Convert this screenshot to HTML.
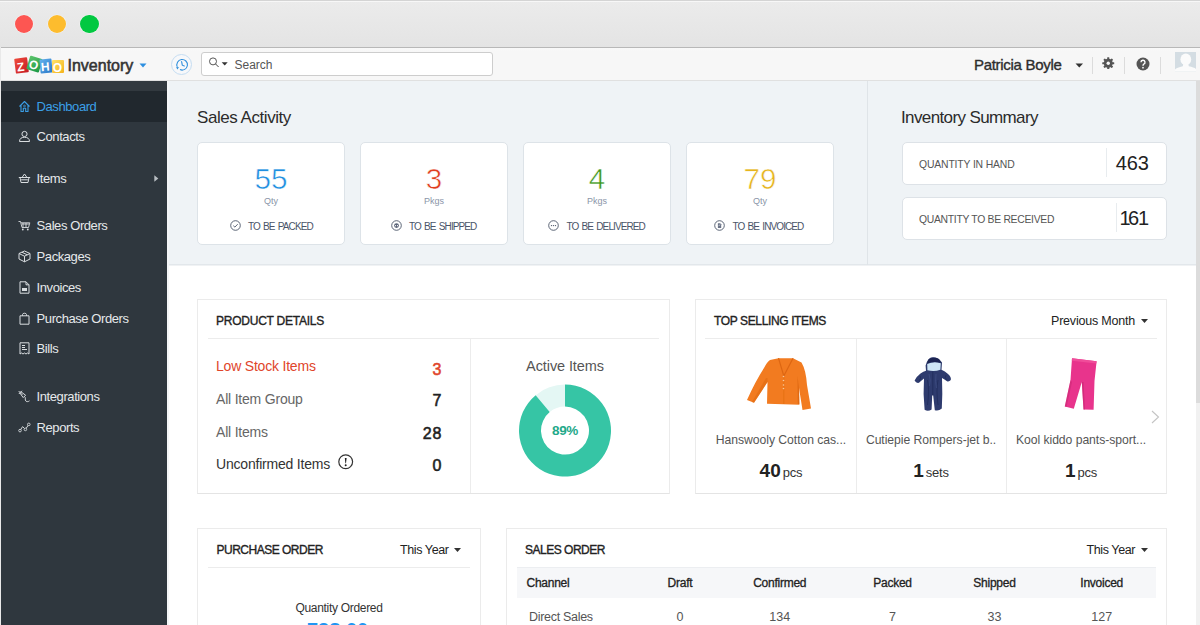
<!DOCTYPE html>
<html><head><meta charset="utf-8">
<style>
*{box-sizing:border-box;margin:0;padding:0}
html,body{width:1200px;height:625px;overflow:hidden;background:#fff;font-family:"Liberation Sans",sans-serif;color:#333}
.a{position:absolute}
.t{position:absolute;white-space:nowrap;line-height:1}
#titlebar{left:0;top:0;width:1200px;height:47px;background:linear-gradient(#ebebeb,#e4e4e4);border-top:1px solid #d4d4d4;box-shadow:inset 0 1px 0 #f7f7f7}
.dot{position:absolute;width:18.5px;height:18.5px;border-radius:50%;top:13.5px;box-shadow:0 0 0 0.6px rgba(255,255,255,0.5)}
#header{left:0;top:47px;width:1200px;height:34px;background:linear-gradient(#b8b8b8 0,#b8b8b8 1px,#f9f9f9 1px,#f7f7f7 4px);border-bottom:1px solid #e0e0e0}
#side{left:1px;top:81px;width:166px;height:544px;background:#2f373e}
.nav{position:absolute;left:35.6px;font-size:13px;color:#e8eaec;letter-spacing:-0.42px;line-height:1}
.ico{position:absolute;left:17.2px}
#topsec{left:167px;top:81px;width:1029px;height:184px;background:#eff3f6;border-bottom:1px solid #e2e7eb}
.sc{position:absolute;top:142px;width:148px;height:103px;background:#fff;border:1px solid #dde3e8;border-radius:5px}
.num{position:absolute;left:0;width:100%;text-align:center;top:23px;font-size:29px;line-height:1;font-weight:400}
.unit{position:absolute;left:0;width:100%;text-align:center;top:54px;font-size:9.5px;color:#8e9aab;line-height:1}
.lbl{position:absolute;left:0;width:100%;text-align:center;top:79px;font-size:10px;color:#4b5566;letter-spacing:-0.55px;line-height:1;white-space:nowrap}
.card{position:absolute;background:#fff;border:1px solid #ebebeb;border-bottom-color:#e4e4e4}
.hd{position:absolute;font-size:12px;font-weight:400;-webkit-text-stroke:0.35px #222;color:#222;letter-spacing:-0.5px;line-height:1;white-space:nowrap}
</style></head><body>
<div id="titlebar" class="a">
  <div class="dot" style="left:14.5px;background:#fd5652"></div>
  <div class="dot" style="left:47.5px;background:#fdbc2e"></div>
  <div class="dot" style="left:80.3px;background:#02c841"></div>
</div>
<div id="header" class="a">
  <div class="a" style="left:14.5px;top:11px;width:12.5px;height:15px;background:linear-gradient(135deg,#ef4b3c,#c61d26);transform:rotate(-7deg);border-radius:1px"></div>
  <div class="t" style="left:16.5px;top:13.5px;font-size:12px;font-weight:700;color:#fff;transform:rotate(-7deg)">Z</div>
  <div class="a" style="left:27.5px;top:10px;width:12.5px;height:14px;background:linear-gradient(135deg,#5ec56c,#1a9944);transform:rotate(17deg);border-radius:1px"></div>
  <div class="t" style="left:29px;top:12px;font-size:12px;font-weight:700;color:#fff;transform:rotate(17deg)">O</div>
  <div class="a" style="left:39.5px;top:12px;width:12px;height:13.5px;background:linear-gradient(135deg,#64b2ee,#2877c7);transform:rotate(-5deg);border-radius:1px"></div>
  <div class="t" style="left:41px;top:14px;font-size:12px;font-weight:700;color:#fff;transform:rotate(-5deg)">H</div>
  <div class="a" style="left:51.5px;top:12.5px;width:12px;height:13px;background:linear-gradient(135deg,#ffe36a,#f5b21a);border-radius:1px"></div>
  <div class="t" style="left:52.7px;top:14.5px;font-size:12px;font-weight:700;color:#fff">O</div>
  <div class="t" style="left:67.5px;top:11px;font-size:16px;font-weight:400;color:#333;-webkit-text-stroke:0.55px #333">Inventory</div>
  <svg class="a" style="left:139px;top:16px" width="8" height="5"><path d="M0.5 0.5 L7.5 0.5 L4 4.5Z" fill="#2d8fe0"/></svg>
  <div class="a" style="left:171px;top:7px;width:21px;height:21px;border-radius:50%;border:1px solid #c5ddf2;background:#f7f8fa"></div>
  <svg class="a" style="left:175px;top:11px" width="14" height="14" viewBox="0 0 14 14"><path d="M5 11.6 A5.3 5.3 0 1 0 2.3 8.9" fill="none" stroke="#2f8fdc" stroke-width="1.1"/><path d="M1 9.3 L3.9 9.1 L2.6 11.6Z" fill="#2f8fdc"/><path d="M6.6 3.6 L7.3 7.2 L9.3 8" fill="none" stroke="#2f8fdc" stroke-width="1.1" stroke-linecap="round"/></svg>
  <div class="a" style="left:201px;top:5px;width:292px;height:24px;border:1px solid #cdcdcd;border-radius:3px;background:#fff"></div>
  <svg class="a" style="left:208px;top:10px" width="22" height="12" viewBox="0 0 22 12"><circle cx="5" cy="4.4" r="3.5" fill="none" stroke="#444" stroke-width="0.9"/><path d="M7.5 6.9 L10.6 10" stroke="#444" stroke-width="1"/><path d="M13.7 5.3 L19.7 5.3 L16.7 8.4Z" fill="#333"/></svg>
  <div class="t" style="left:234.5px;top:11.6px;font-size:12px;color:#555">Search</div>
  <div class="t" style="left:974px;top:9.8px;font-size:15px;font-weight:400;color:#2d2d2d;letter-spacing:-0.3px;-webkit-text-stroke:0.35px #2d2d2d">Patricia Boyle</div>
  <svg class="a" style="left:1075px;top:16px" width="9" height="5"><path d="M0.5 0.5 L8 0.5 L4.25 4.5Z" fill="#333"/></svg>
  <div class="a" style="left:1092px;top:9.8px;width:1px;height:17px;background:#dcdcdc"></div>
  <svg class="a" style="left:1102px;top:9.8px" width="12.5" height="12.5" viewBox="0 0 14 14"><g fill="#555"><circle cx="7" cy="7" r="5"/><rect x="5.8" y="0.3" width="2.4" height="3" rx="0.6"/><rect x="5.8" y="10.7" width="2.4" height="3" rx="0.6"/><rect x="0.3" y="5.8" width="3" height="2.4" rx="0.6"/><rect x="10.7" y="5.8" width="3" height="2.4" rx="0.6"/><rect x="5.8" y="0.3" width="2.4" height="3" rx="0.6" transform="rotate(45 7 7)"/><rect x="5.8" y="10.7" width="2.4" height="3" rx="0.6" transform="rotate(45 7 7)"/><rect x="0.3" y="5.8" width="3" height="2.4" rx="0.6" transform="rotate(45 7 7)"/><rect x="10.7" y="5.8" width="3" height="2.4" rx="0.6" transform="rotate(45 7 7)"/></g><circle cx="7" cy="7" r="1.9" fill="#f7f7f7"/></svg>
  <div class="a" style="left:1124px;top:9.8px;width:1px;height:17px;background:#dcdcdc"></div>
  <svg class="a" style="left:1135.6px;top:9.9px" width="14" height="14" viewBox="0 0 14 14"><circle cx="7" cy="7" r="6.5" fill="#555"/><path d="M5 5.3 A2 2 0 1 1 7.8 7.1 Q7 7.6 7 8.7" fill="none" stroke="#fff" stroke-width="1.4"/><circle cx="7" cy="10.7" r="0.85" fill="#fff"/></svg>
  <div class="a" style="left:1160px;top:9.8px;width:1px;height:17px;background:#dcdcdc"></div>
  <svg class="a" style="left:1174.5px;top:5.3px" width="21.5" height="19.5" viewBox="0 0 21.5 19.5"><rect width="21.5" height="19.5" fill="#d4dde3"/><ellipse cx="10.8" cy="7.4" rx="5.4" ry="5.9" fill="#fbfbfb"/><path d="M8.3 12 L13.3 12 L13.8 14.3 C17.5 15.2 20.5 16 21.5 17.5 V19.5 H0 V17.5 C1 16 4 15.2 7.8 14.3Z" fill="#fbfbfb"/></svg>
</div>
<div id="side" class="a">
  <div class="a" style="left:0;top:0;width:166px;height:10px;background:#32393f"></div>
  <div class="a" style="left:0;top:10px;width:166px;height:31px;background:#21282e"></div>
  <div class="nav" style="top:18.6px;color:#3ba0e8">Dashboard</div>
  <svg class="ico" style="top:18.5px" width="13" height="13" viewBox="0 0 13 13"><path d="M1.5 6.5 L6.5 1.5 L11.5 6.5 M3 5 V11.5 H5.3 V8.3 H7.7 V11.5 H10 V5" fill="none" stroke="#3b9ee6" stroke-width="1.1" stroke-linejoin="round"/><circle cx="6.5" cy="6" r="0.9" fill="none" stroke="#3b9ee6" stroke-width="0.8"/></svg>
  <div class="nav" style="top:49.2px;color:#e6e9eb">Contacts</div>
  <svg class="ico" style="top:49.1px" width="13" height="13" viewBox="0 0 13 13"><circle cx="6.5" cy="4" r="2.6" fill="none" stroke="#d9dde0" stroke-width="1"/><path d="M1.5 11.5 C1.5 8.5 3.5 7.3 6.5 7.3 C9.5 7.3 11.5 8.5 11.5 11.5 Z" fill="none" stroke="#d9dde0" stroke-width="1" stroke-linejoin="round"/></svg>
  <div class="nav" style="top:90.6px;color:#e6e9eb">Items</div>
  <svg class="ico" style="top:90.5px" width="13" height="13" viewBox="0 0 13 13"><path d="M0.8 5.5 H12.2 M2 5.5 L3 10.5 H10 L11 5.5 M4 5.5 L6.5 2 L9 5.5 M3.2 7.8 H9.8" fill="none" stroke="#d9dde0" stroke-width="1" stroke-linejoin="round"/></svg>
  <div class="nav" style="top:137.6px;color:#e6e9eb">Sales Orders</div>
  <svg class="ico" style="top:137.5px" width="13" height="13" viewBox="0 0 13 13"><path d="M0.5 2.5 H2.5 L4 8.5 H10.5 L11.8 3.8 H3 M4 5 H11 M5 8.5 L5 4 M8 8.5 V4" fill="none" stroke="#d9dde0" stroke-width="0.9"/><circle cx="4.8" cy="10.5" r="0.9" fill="#d9dde0"/><circle cx="9.8" cy="10.5" r="0.9" fill="#d9dde0"/></svg>
  <div class="nav" style="top:168.8px;color:#e6e9eb">Packages</div>
  <svg class="ico" style="top:168.7px" width="13" height="13" viewBox="0 0 13 13"><path d="M6.5 1 L12 3.5 V9 L6.5 11.8 L1 9 V3.5 Z M1 3.5 L6.5 6.2 L12 3.5 M6.5 6.2 V11.8 M3.8 2.2 L9.3 4.8" fill="none" stroke="#d9dde0" stroke-width="1" stroke-linejoin="round"/></svg>
  <div class="nav" style="top:199.6px;color:#e6e9eb">Invoices</div>
  <svg class="ico" style="top:199.5px" width="13" height="13" viewBox="0 0 13 13"><path d="M2 0.8 H8 L11 3.8 V12.2 H2 Z M8 0.8 V3.8 H11" fill="none" stroke="#d9dde0" stroke-width="1" stroke-linejoin="round"/><rect x="4" y="7" width="5" height="3" fill="#d9dde0"/></svg>
  <div class="nav" style="top:230.6px;color:#e6e9eb">Purchase Orders</div>
  <svg class="ico" style="top:230.5px" width="13" height="13" viewBox="0 0 13 13"><path d="M2 3.8 H11 V12.2 H2 Z M4.5 3.8 V2.5 C4.5 0.8 8.5 0.8 8.5 2.5 V3.8" fill="none" stroke="#d9dde0" stroke-width="1" stroke-linejoin="round"/></svg>
  <div class="nav" style="top:261.2px;color:#e6e9eb">Bills</div>
  <svg class="ico" style="top:261.1px" width="13" height="13" viewBox="0 0 13 13"><path d="M2 0.8 H11 V12 L9.5 11 L8 12 L6.5 11 L5 12 L3.5 11 L2 12 Z" fill="none" stroke="#d9dde0" stroke-width="1" stroke-linejoin="round"/><path d="M4 3.5 H7 M4 5.5 H7 M4 7.5 H9" stroke="#d9dde0" stroke-width="1"/></svg>
  <div class="nav" style="top:309.0px;color:#e6e9eb">Integrations</div>
  <svg class="ico" style="top:308.9px" width="13" height="13" viewBox="0 0 13 13"><path d="M0.8 4 L4 0.8 M2.2 2.6 L0.6 1 M4.4 4.8 L2.8 3.2 M2.6 1.6 L7.6 5.2 L5.2 7.6 L1.6 2.6 M6.4 6.4 C8.5 8.2 6.2 9.6 8 11.2 C9 12 10.5 11.6 11.5 10.8" fill="none" stroke="#d4d8db" stroke-width="1" stroke-linejoin="round"/></svg>
  <div class="nav" style="top:339.6px;color:#e6e9eb">Reports</div>
  <svg class="ico" style="top:339.5px" width="13" height="13" viewBox="0 0 13 13"><path d="M2 9.6 L4.6 5.6 L7.4 8.4 L10.8 3.4" fill="none" stroke="#d4d8db" stroke-width="1"/><circle cx="2" cy="9.6" r="1.3" fill="#2f373e" stroke="#d4d8db" stroke-width="0.9"/><circle cx="7.4" cy="8.4" r="1.3" fill="#2f373e" stroke="#d4d8db" stroke-width="0.9"/><circle cx="10.8" cy="3.4" r="1.3" fill="#2f373e" stroke="#d4d8db" stroke-width="0.9"/></svg>
  <svg class="a" style="left:153px;top:94px" width="5" height="7"><path d="M0.3 0.3 L4.3 3.5 L0.3 6.7Z" fill="#b9bec3"/></svg>
</div>
<div id="topsec" class="a"></div>
<div class="a" style="left:867px;top:81px;width:1px;height:184px;background:#dfe4e8"></div>
<div class="t" style="left:197px;top:108.5px;font-size:17px;color:#2b2b2b;letter-spacing:-0.45px">Sales Activity</div>
<div class="t" style="left:901px;top:108.5px;font-size:17px;color:#2b2b2b;letter-spacing:-0.62px">Inventory Summary</div>
<div class="sc" style="left:197px"></div>
<div class="t" style="left:197px;width:148px;text-align:center;top:163.7px;font-size:29.6px;-webkit-text-stroke:0.55px #fff;color:#1f8ee0">55</div>
<div class="t" style="left:197px;width:148px;text-align:center;top:196.7px;font-size:9px;color:#8a95a8">Qty</div>
<svg class="a" style="left:229.5px;top:220px" width="11" height="11" viewBox="0 0 11 11"><circle cx="5.5" cy="5.5" r="4.8" fill="none" stroke="#4b5568" stroke-width="0.9"/><path d="M3.3 5.7 L4.9 7.1 L7.7 4.2" fill="none" stroke="#4b5568" stroke-width="0.9"/></svg>
<div class="t" style="left:248.0px;top:221.9px;font-size:10px;color:#4a5468;letter-spacing:-0.9px;word-spacing:1.3px">TO BE PACKED</div>
<div class="sc" style="left:360px"></div>
<div class="t" style="left:360px;width:148px;text-align:center;top:163.7px;font-size:29.6px;-webkit-text-stroke:0.55px #fff;color:#e03c1e">3</div>
<div class="t" style="left:360px;width:148px;text-align:center;top:196.7px;font-size:9px;color:#8a95a8">Pkgs</div>
<svg class="a" style="left:390.5px;top:220px" width="11" height="11" viewBox="0 0 11 11"><circle cx="5.5" cy="5.5" r="4.8" fill="none" stroke="#4b5568" stroke-width="0.9"/><ellipse cx="5.5" cy="5.6" rx="2.4" ry="2.3" fill="#5b6478"/><circle cx="4.5" cy="5.7" r="0.6" fill="#fff"/><circle cx="6.5" cy="5.7" r="0.6" fill="#fff"/></svg>
<div class="t" style="left:409.0px;top:221.9px;font-size:10px;color:#4a5468;letter-spacing:-0.9px;word-spacing:1.3px">TO BE SHIPPED</div>
<div class="sc" style="left:523px"></div>
<div class="t" style="left:523px;width:148px;text-align:center;top:163.7px;font-size:29.6px;-webkit-text-stroke:0.55px #fff;color:#3c961c">4</div>
<div class="t" style="left:523px;width:148px;text-align:center;top:196.7px;font-size:9px;color:#8a95a8">Pkgs</div>
<svg class="a" style="left:548.0px;top:220px" width="11" height="11" viewBox="0 0 11 11"><circle cx="5.5" cy="5.5" r="4.8" fill="none" stroke="#4b5568" stroke-width="0.9"/><circle cx="3.5" cy="5.6" r="0.7" fill="#4b5568"/><circle cx="5.5" cy="5.6" r="0.7" fill="#4b5568"/><circle cx="7.5" cy="5.6" r="0.7" fill="#4b5568"/></svg>
<div class="t" style="left:566.5px;top:221.9px;font-size:10px;color:#4a5468;letter-spacing:-0.9px;word-spacing:1.3px">TO BE DELIVERED</div>
<div class="sc" style="left:686px"></div>
<div class="t" style="left:686px;width:148px;text-align:center;top:163.7px;font-size:29.6px;-webkit-text-stroke:0.55px #fff;color:#e6b41e">79</div>
<div class="t" style="left:686px;width:148px;text-align:center;top:196.7px;font-size:9px;color:#8a95a8">Qty</div>
<svg class="a" style="left:714.0px;top:220px" width="11" height="11" viewBox="0 0 11 11"><circle cx="5.5" cy="5.5" r="4.8" fill="none" stroke="#4b5568" stroke-width="0.9"/><path d="M3.9 3.2 H6.2 L7.2 4.2 V8 H3.9 Z" fill="#6a7386"/><path d="M4.6 5.6 L6.4 4.8" stroke="#fff" stroke-width="0.6"/></svg>
<div class="t" style="left:732.5px;top:221.9px;font-size:10px;color:#4a5468;letter-spacing:-0.9px;word-spacing:1.3px">TO BE INVOICED</div>
<div class="a" style="left:902px;top:142px;width:265px;height:43px;background:#fff;border:1px solid #dde2e7;border-radius:5px"></div>
<div class="t" style="left:919px;top:159.5px;font-size:10.4px;color:#555;letter-spacing:-0.15px">QUANTITY IN HAND</div>
<div class="a" style="left:1106px;top:148px;width:1px;height:29px;background:#e8ecef"></div>
<div class="t" style="left:1000px;width:149px;text-align:right;top:153.3px;font-size:20px;color:#222">463</div>
<div class="a" style="left:902px;top:197px;width:265px;height:43px;background:#fff;border:1px solid #dde2e7;border-radius:5px"></div>
<div class="t" style="left:919px;top:214.5px;font-size:10.4px;color:#555;letter-spacing:-0.3px">QUANTITY TO BE RECEIVED</div>
<div class="a" style="left:1116px;top:203px;width:1px;height:29px;background:#e8ecef"></div>
<div class="t" style="left:1000px;width:149px;text-align:right;top:208.3px;font-size:20px;color:#222;letter-spacing:-2.6px;padding-right:0">1<span style="letter-spacing:-1.2px">6</span><span style="letter-spacing:0">1</span></div>
<div class="card" style="left:197px;top:299px;width:473px;height:195px"></div>
<div class="hd" style="left:216px;top:315.0px;letter-spacing:-0.24px">PRODUCT DETAILS</div>
<div class="a" style="left:208px;top:338px;width:451px;height:1px;background:#ececec"></div>
<div class="a" style="left:470px;top:339px;width:1px;height:154px;background:#ececec"></div>
<div class="t" style="left:216px;top:359.4px;font-size:14px;color:#e0452b;letter-spacing:-0.2px">Low Stock Items</div>
<div class="t" style="left:341px;width:100.5px;text-align:right;top:361.6px;font-size:16px;font-weight:400;-webkit-text-stroke:0.55px #e0452b;color:#e0452b">3</div>
<div class="t" style="left:216px;top:392.0px;font-size:14px;color:#666;letter-spacing:-0.2px">All Item Group</div>
<div class="t" style="left:341px;width:100.5px;text-align:right;top:393.4px;font-size:16px;font-weight:400;-webkit-text-stroke:0.55px #222;color:#222">7</div>
<div class="t" style="left:216px;top:424.7px;font-size:14px;color:#666;letter-spacing:-0.2px">All Items</div>
<div class="t" style="left:341px;width:101.5px;text-align:right;top:425.6px;font-size:16px;letter-spacing:1px;font-weight:400;-webkit-text-stroke:0.55px #222;color:#222">28</div>
<div class="t" style="left:216px;top:457.0px;font-size:14px;color:#333;letter-spacing:-0.2px">Unconfirmed Items</div>
<div class="t" style="left:341px;width:100.5px;text-align:right;top:458.3px;font-size:16px;font-weight:400;-webkit-text-stroke:0.55px #222;color:#222">0</div>
<svg class="a" style="left:338px;top:454px" width="16" height="16" viewBox="0 0 16 16"><circle cx="7.7" cy="7.8" r="6.9" fill="none" stroke="#333" stroke-width="1.2"/><path d="M6.8 4 L8.6 4 L8 9.3 L7.4 9.3 Z" fill="#222"/><circle cx="7.7" cy="11.2" r="1" fill="#222"/></svg>
<div class="t" style="left:470px;width:190px;text-align:center;top:359.4px;font-size:14.5px;color:#555;letter-spacing:-0.1px">Active Items</div>
<svg class="a" style="left:0;top:0" width="1200" height="625"><path d="M535.68 395.16 A46 46 0 0 1 565 384.6 L565 406.6 A24 24 0 0 0 549.70 412.11 Z" fill="#e4f7f4"/><path d="M565 384.6 A46 46 0 1 1 535.68 395.16 L549.70 412.11 A24 24 0 1 0 565 406.6 Z" fill="#36c5a5"/></svg>
<div class="t" style="left:515px;width:100px;text-align:center;top:423.6px;font-size:13.5px;font-weight:700;color:#1fa98a;letter-spacing:-0.4px">89%</div>
<div class="card" style="left:695px;top:299px;width:472px;height:195px"></div>
<div class="hd" style="left:714px;top:315.0px;letter-spacing:-0.37px">TOP SELLING ITEMS</div>
<div class="t" style="left:1051px;top:314.5px;font-size:12.5px;color:#222;letter-spacing:-0.2px">Previous Month</div>
<svg class="a" style="left:1141px;top:319px" width="7" height="4"><path d="M0 0 L7 0 L3.5 4Z" fill="#333"/></svg>
<div class="a" style="left:705px;top:338px;width:452px;height:1px;background:#ececec"></div>
<div class="a" style="left:856px;top:339px;width:1px;height:154px;background:#ececec"></div>
<div class="a" style="left:1006px;top:339px;width:1px;height:154px;background:#ececec"></div>
<div class="t" style="left:706px;width:150px;text-align:center;top:434.2px;font-size:12.2px;color:#555;letter-spacing:-0.05px">Hanswooly Cotton cas...</div>
<div class="t" style="left:706px;width:150px;text-align:center;top:460.7px;font-size:19px;color:#222"><b>40</b><span style="font-size:13px;color:#333;margin-left:2px;letter-spacing:-0.2px">pcs</span></div>
<div class="t" style="left:856px;width:150px;text-align:center;top:434.2px;font-size:12.2px;color:#555;letter-spacing:-0.05px">Cutiepie Rompers-jet b..</div>
<div class="t" style="left:856px;width:150px;text-align:center;top:460.7px;font-size:19px;color:#222"><b>1</b><span style="font-size:13px;color:#333;margin-left:2px;letter-spacing:-0.2px">sets</span></div>
<div class="t" style="left:1006px;width:150px;text-align:center;top:434.2px;font-size:12.2px;color:#555;letter-spacing:-0.05px">Kool kiddo pants-sport...</div>
<div class="t" style="left:1006px;width:150px;text-align:center;top:460.7px;font-size:19px;color:#222"><b>1</b><span style="font-size:13px;color:#333;margin-left:2px;letter-spacing:-0.2px">pcs</span></div>
<svg class="a" style="left:1151px;top:410px" width="9" height="14"><path d="M1 1 L7.5 7 L1 13" fill="none" stroke="#c4c4c4" stroke-width="1.1"/></svg>
<svg class="a" style="left:740px;top:350px" width="80" height="65" viewBox="0 0 80 65">
<path d="M30 10 L38.5 8.2 L53 8.2 L61.5 12.5 Q66 20 67 35 L71 58.5 L62.5 60 L59 38 L59.4 54.7 L27 53.8 L27.5 32 L14 52.8 L7 50 Q15 32 24 18 Q27 12 30 10 Z" fill="#f27b20"/>
<path d="M27.5 28 L27.5 32 L14 52.8 L12 52 L26 28Z" fill="#e06a12" opacity="0.6"/>
<path d="M57.5 26 L59 38 L59.4 54 L57.8 54 L57.5 30Z" fill="#d9640e" opacity="0.7"/>
<path d="M38.5 8.2 L43.8 26 L53 8.2" fill="none" stroke="#dd6612" stroke-width="1.2"/>
<path d="M43.8 26 V54" stroke="#e2700f" stroke-width="0.8"/>
<g fill="#f8c89a"><circle cx="43.5" cy="26.5" r="0.8"/><circle cx="43.5" cy="30.5" r="0.8"/><circle cx="43.5" cy="35" r="0.8"/><circle cx="43.5" cy="38.5" r="0.8"/></g>
</svg>
<svg class="a" style="left:905px;top:350px" width="55" height="65" viewBox="0 0 55 65">
<path d="M27 7.2 Q33 6.5 37 12.5 L36.5 19.8 Q40 21 43 24 Q46.5 27.2 45.8 30 Q44 32 42 31.2 Q39.5 29.5 37 28 L37.3 44 L36.8 58.5 Q33.5 61.5 29.8 60.2 L28.2 45.5 L27.2 45.5 L26.6 59.5 Q23 61.8 19.6 59.8 L18.6 44 L19 28.5 Q16.5 30.5 14 32.8 Q11 33.5 9.6 30.5 Q11.5 26.5 15.5 23.5 Q18.5 21.5 21 20.8 L20.6 15.5 Q22.5 8 27 7.2Z" fill="#2e3b6e"/>
<path d="M22.2 14 Q28.5 11.2 35.8 13.2 L35.4 19.8 Q29 22 22.4 20.2Z" fill="#cfe6f6"/>
<path d="M23.5 9.5 Q28 6.2 34 9 L36.2 13 Q29 10.8 22 13.5Z" fill="#1c2452"/>
<path d="M27.8 21.5 V45 M22.5 30 Q24.5 40 22.5 55 M33 30 Q31 40 33 55 M15 26 Q17 28 14 31 M41 25 Q39 28 42 30" fill="none" stroke="#1d2856" stroke-width="0.9" opacity="0.75"/>
<path d="M24 24 Q26 30 24.5 36 M31 24 Q30 32 31.5 38" fill="none" stroke="#4a5a92" stroke-width="0.8" opacity="0.6"/>
</svg>
<svg class="a" style="left:1055px;top:350px" width="50" height="65" viewBox="0 0 50 65">
<path d="M17 8.3 L41.6 11.2 L39.5 31 L38.6 59.8 L28.5 59.4 L26.8 32 L18.8 58.7 L9.8 56.6 L15.5 30 Z" fill="#e8348c"/>
<path d="M17 8.3 L41.6 11.2 L41.3 13.5 L16.8 10.8Z" fill="#f04c9a"/>
<path d="M26.8 32 L28.5 59.4 L30 59.5 L28.5 32Z" fill="#c42570" opacity="0.6"/>
<path d="M15.5 30 L9.8 56.6 L11.5 57 L17 32Z" fill="#c42570" opacity="0.5"/>
</svg>
<div class="card" style="left:197px;top:528px;width:284px;height:120px"></div>
<div class="hd" style="left:216.5px;top:544.1px;letter-spacing:-0.5px">PURCHASE ORDER</div>
<div class="t" style="left:400px;top:543.7px;font-size:12.5px;color:#222;letter-spacing:-0.4px">This Year</div>
<svg class="a" style="left:454px;top:548px" width="7" height="4"><path d="M0 0 L7 0 L3.5 4Z" fill="#333"/></svg>
<div class="a" style="left:208px;top:567px;width:262px;height:1px;background:#ececec"></div>
<div class="t" style="left:197px;width:284px;text-align:center;top:601.5px;font-size:12px;color:#333;letter-spacing:-0.3px">Quantity Ordered</div>
<div class="t" style="left:307px;top:620.4px;font-size:20px;font-weight:700;color:#2196f3">738.00</div>
<div class="card" style="left:506px;top:528px;width:661px;height:120px"></div>
<div class="hd" style="left:525px;top:544.1px;letter-spacing:-0.49px">SALES ORDER</div>
<div class="t" style="left:1086.5px;top:543.7px;font-size:12.5px;color:#222;letter-spacing:-0.4px">This Year</div>
<svg class="a" style="left:1141px;top:548px" width="7" height="4"><path d="M0 0 L7 0 L3.5 4Z" fill="#333"/></svg>
<div class="a" style="left:517px;top:567px;width:639px;height:31px;background:#f6f7f9;border-top:1px solid #eceef1"></div>
<div class="t" style="left:526.5px;top:576.6px;font-size:12px;font-weight:400;-webkit-text-stroke:0.3px #222;color:#222;letter-spacing:-0.25px">Channel</div>
<div class="t" style="left:529px;top:610.9px;font-size:12.5px;color:#555;letter-spacing:-0.3px">Direct Sales</div>
<div class="t" style="left:620px;width:120px;text-align:center;top:576.6px;font-size:12px;font-weight:400;-webkit-text-stroke:0.3px #222;color:#222;letter-spacing:-0.25px">Draft</div>
<div class="t" style="left:620px;width:120px;text-align:center;top:610.9px;font-size:12.5px;color:#555">0</div>
<div class="t" style="left:719.7px;width:120px;text-align:center;top:576.6px;font-size:12px;font-weight:400;-webkit-text-stroke:0.3px #222;color:#222;letter-spacing:-0.25px">Confirmed</div>
<div class="t" style="left:719.7px;width:120px;text-align:center;top:610.9px;font-size:12.5px;color:#555">134</div>
<div class="t" style="left:832.5px;width:120px;text-align:center;top:576.6px;font-size:12px;font-weight:400;-webkit-text-stroke:0.3px #222;color:#222;letter-spacing:-0.25px">Packed</div>
<div class="t" style="left:832.5px;width:120px;text-align:center;top:610.9px;font-size:12.5px;color:#555">7</div>
<div class="t" style="left:934.5px;width:120px;text-align:center;top:576.6px;font-size:12px;font-weight:400;-webkit-text-stroke:0.3px #222;color:#222;letter-spacing:-0.25px">Shipped</div>
<div class="t" style="left:934.5px;width:120px;text-align:center;top:610.9px;font-size:12.5px;color:#555">33</div>
<div class="t" style="left:1041.7px;width:120px;text-align:center;top:576.6px;font-size:12px;font-weight:400;-webkit-text-stroke:0.3px #222;color:#222;letter-spacing:-0.25px">Invoiced</div>
<div class="t" style="left:1041.7px;width:120px;text-align:center;top:610.9px;font-size:12.5px;color:#555">127</div>
<div class="a" style="left:1196px;top:81px;width:4px;height:544px;background:#f1f1f1"></div>
<div class="a" style="left:1196px;top:81px;width:4px;height:322px;background:#dcdcdc"></div>
<div class="a" style="left:0;top:47px;width:1px;height:578px;background:#e9e9e9"></div>
<div class="a" style="left:167px;top:81px;width:2px;height:544px;background:linear-gradient(90deg,#f5f6f7,#f3f6f8)"></div>
<div class="a" style="left:169px;top:265px;width:1027px;height:1px;background:#f0f2f4"></div>
</body></html>
